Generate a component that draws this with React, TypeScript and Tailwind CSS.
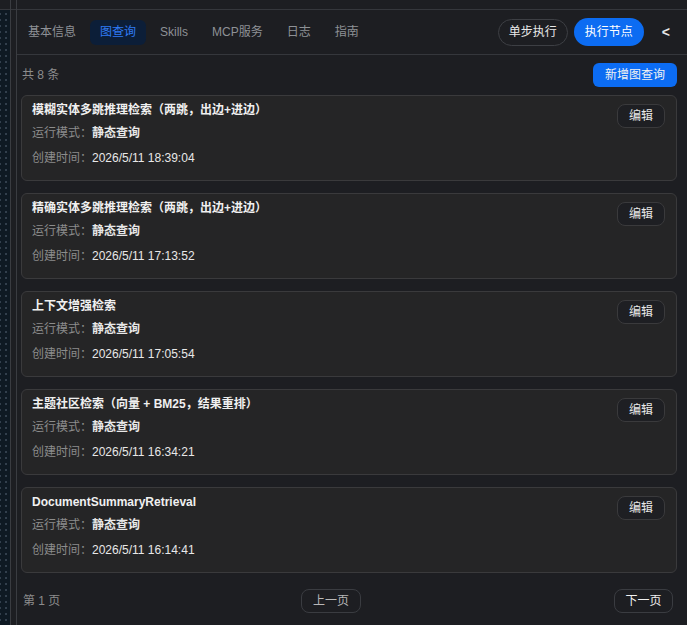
import React from 'react';

const tabs = ['基本信息', '图查询', 'Skills', 'MCP服务', '日志', '指南'];

const queries = [
  { name: '模糊实体多跳推理检索（两跳，出边+进边）', created: '2026/5/11 18:39:04' },
  { name: '精确实体多跳推理检索（两跳，出边+进边）', created: '2026/5/11 17:13:52' },
  { name: '上下文增强检索', created: '2026/5/11 17:05:54' },
  { name: '主题社区检索（向量 + BM25，结果重排）', created: '2026/5/11 16:34:21' },
  { name: 'DocumentSummaryRetrieval', created: '2026/5/11 16:14:41' },
];

const QueryCard = ({ name, created }: { name: string; created: string }) => (
  <div className="flex h-[86px] items-start justify-between rounded-md border border-[#3a3a3c] bg-[#252526] pl-[10px] pr-[11px] pt-[6px]">
    <div className="flex flex-col">
      <div className="text-[12px] font-semibold leading-[16px] text-[#f0f0f0]">{name}</div>
      <div className="mt-[7px] text-[12px] leading-[16px]">
        <span className="text-[#8c8c8c]">运行模式：</span>
        <span className="font-semibold text-[#e8e8e8]">静态查询</span>
      </div>
      <div className="mt-[9px] text-[12px] leading-[16px]">
        <span className="text-[#8c8c8c]">创建时间：</span>
        <span className="text-[#e8e8e8]">{created}</span>
      </div>
    </div>
    <button className="mt-[2px] h-[24px] w-[48px] rounded-lg border border-[#3a3a3c] bg-[#1e1f23] text-[12px] text-[#e8e8e8]">
      编辑
    </button>
  </div>
);

export default function App() {
  return (
    <div
      className="flex h-[625px] w-[687px] overflow-hidden bg-[#1d1e22] text-[12px]"
      style={{ fontFamily: '"Liberation Sans", "Noto Sans CJK SC", sans-serif' }}
    >
      {/* dotted rail */}
      <div className="flex w-[10px] flex-col">
        <div className="h-[10px] shrink-0 border-b border-[#35373c] bg-[#1d1e22]" />
        <div className="flex-1 bg-[#0e1923] bg-[radial-gradient(circle,#5a6b7c_0.6px,transparent_0.8px)] bg-[length:6px_6px] bg-[position:3px_1px]" />
      </div>
      <div className="w-px bg-[#3a3c41]" />
      <div className="flex w-[5px] flex-col bg-[#1d1e22]">
        <div className="h-[10px] shrink-0 border-b border-[#35373c]" />
      </div>
      <div className="w-px bg-[#3a3c41]" />

      <div className="flex min-w-0 flex-1 flex-col">
        <div className="h-[10px] shrink-0 border-b border-[#35373c]" />

        {/* tab bar */}
        <div className="flex h-[45px] shrink-0 items-center border-b border-[#35373c] pl-[1px] pr-[17px]">
          <div className="flex items-center gap-[4px]">
            {tabs.map((t) => (
              <div
                key={t}
                className={
                  t === '图查询'
                    ? 'flex h-[25px] items-center rounded-md bg-[#0c1e38] px-[10px] text-[12px] text-[#2f7bf5]'
                    : 'flex h-[25px] items-center px-[10px] text-[12px] text-[#8e9196]'
                }
              >
                {t}
              </div>
            ))}
          </div>
          <div className="ml-auto flex items-center">
            <button className="h-[27px] w-[70px] rounded-full border border-[#3d3f44] text-[12px] text-[#e8e8e8]">
              单步执行
            </button>
            <button className="ml-[6px] h-[28px] w-[70px] rounded-full bg-[#0c6cf2] text-[12px] text-white">
              执行节点
            </button>
            <span className="ml-[18px] text-[14px] font-semibold text-[#e8e8e8]">&lt;</span>
          </div>
        </div>

        {/* list */}
        <div className="flex flex-1 flex-col pl-[4px] pr-[10px]">
          <div className="flex h-[40px] items-center justify-between pl-[1px]">
            <span className="text-[12px] text-[#8c8c8c]">共 8 条</span>
            <button className="h-[24px] w-[84px] rounded-md bg-[#0c6cf2] text-[12px] text-[#f2f2f2]">新增图查询</button>
          </div>
          <div className="flex flex-col gap-[12px]">
            {queries.map((q) => (
              <QueryCard key={q.created} name={q.name} created={q.created} />
            ))}
          </div>
          <div className="mt-[16px] flex items-center pl-[2px] pr-[4px]">
            <span className="w-[278px] text-[12px] text-[#8c8c8c]">第 1 页</span>
            <button className="h-[24px] w-[60px] rounded-lg border border-[#3a3c41] text-[12px] text-[#b8b8b8]">
              上一页
            </button>
            <button className="ml-auto h-[24px] w-[59px] rounded-lg border border-[#3a3c41] text-[12px] text-[#f0f0f0]">
              下一页
            </button>
          </div>
        </div>
      </div>
    </div>
  );
}
